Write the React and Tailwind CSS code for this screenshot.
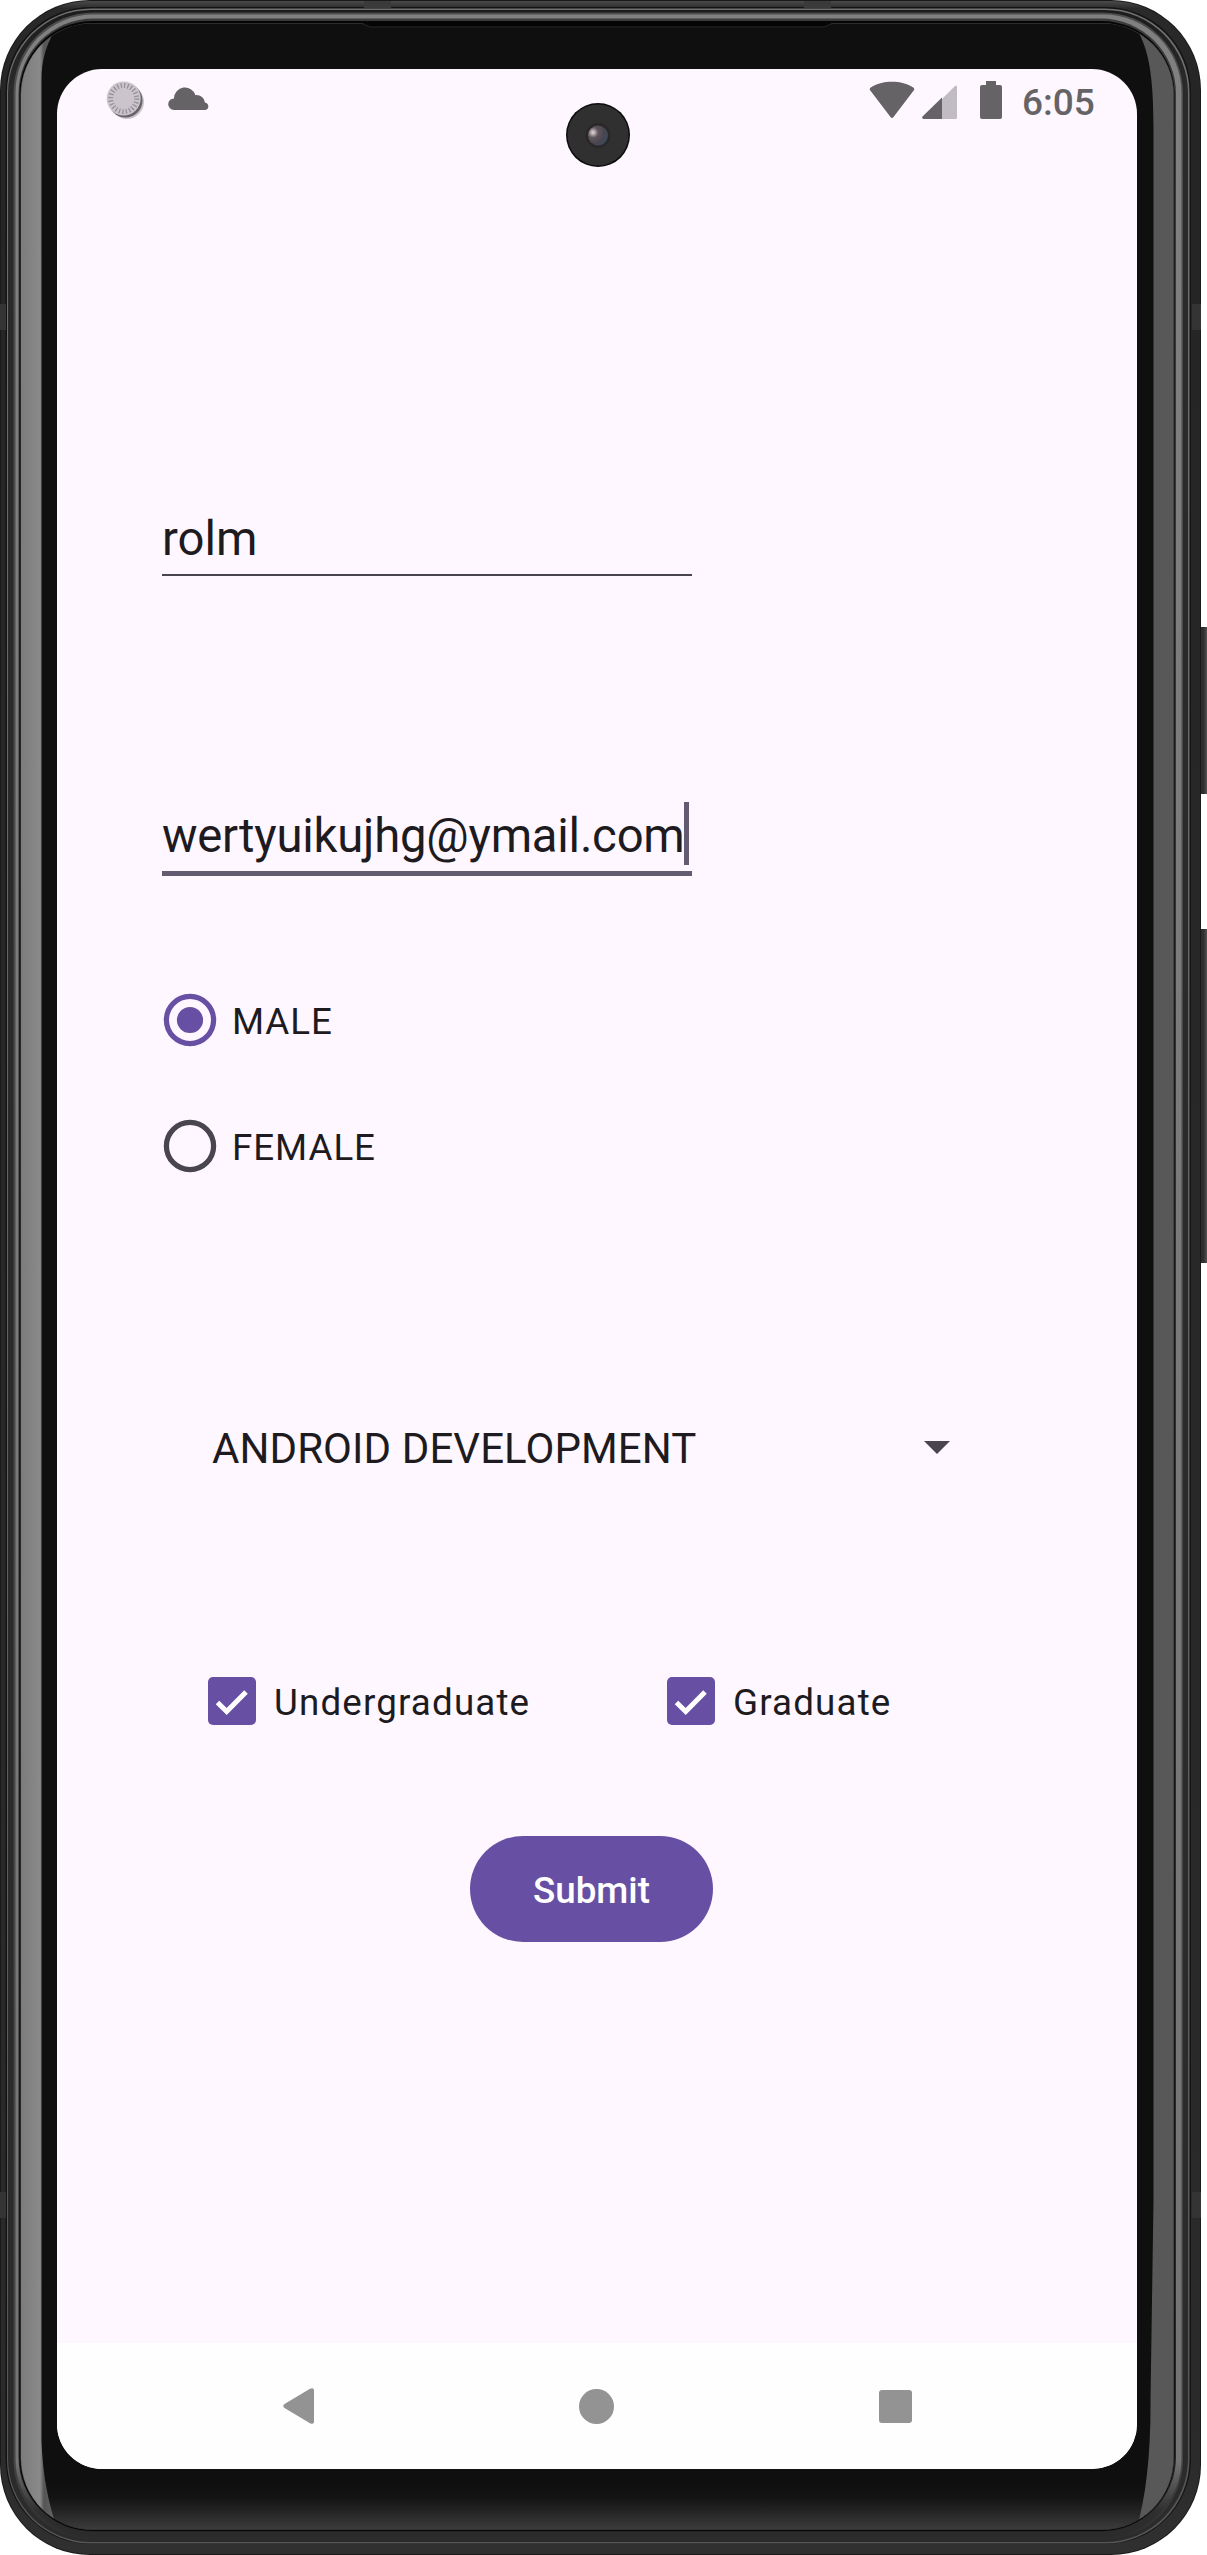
import React from "react";

const rings = [
  // x, y, right, bottom, radius, fill
  [0, 0, 1201, 2555, 90, "#191919"],
  [1, 1, 1200, 2554, 89, "url(#outer)"],
  [5.5, 7, 1191, 2544, 85, "#141414"],
  [7, 8.5, 1189.5, 2543.5, 84, "url(#line)"],
  [8, 10, 1188, 2542, 83, "url(#groove)"],
  [13.5, 12.5, 1183, 2540, 80, "url(#bezel)"],
  [15.5, 14.5, 1181.5, 2537, 78, "url(#shine)"],
  [18.5, 18.5, 1176, 2532, 75, "url(#shade)"],
  [19.5, 21, 1174.5, 2531, 73, "#050505"],
];

function DeviceFrame() {
  return (
    <svg className="absolute inset-0" width="1207" height="2555" viewBox="0 0 1207 2555" aria-hidden="true">
      <defs>
        <linearGradient id="outer" x2="0" y2="1">
          <stop offset="0" stopColor="#4a4a4a" />
          <stop offset="0.003" stopColor="#2a2a2a" />
          <stop offset="0.04" stopColor="#252525" />
          <stop offset="0.95" stopColor="#2a2a2a" />
          <stop offset="1" stopColor="#303030" />
        </linearGradient>
        <linearGradient id="line" x2="0" y2="1">
          <stop offset="0" stopColor="#707070" />
          <stop offset="1" stopColor="#565656" />
        </linearGradient>
        <linearGradient id="groove" x2="0" y2="1">
          <stop offset="0" stopColor="#1c1c1c" />
          <stop offset="0.03" stopColor="#2a2a2a" />
          <stop offset="1" stopColor="#2b2b2b" />
        </linearGradient>
        <linearGradient id="bezel" x2="0" y2="1">
          <stop offset="0" stopColor="#4c4c4c" />
          <stop offset="0.97" stopColor="#444444" />
          <stop offset="1" stopColor="#2c2c2c" />
        </linearGradient>
        <linearGradient id="shine" x2="0" y2="1">
          <stop offset="0" stopColor="#808080" />
          <stop offset="0.97" stopColor="#747474" />
          <stop offset="0.99" stopColor="#2e2e2e" />
          <stop offset="1" stopColor="#2b2b2b" />
        </linearGradient>
        <linearGradient id="shade" x2="0" y2="1">
          <stop offset="0" stopColor="#3b3b3b" />
          <stop offset="1" stopColor="#242424" />
        </linearGradient>
        <linearGradient id="left" x2="1" y2="0">
          <stop offset="0" stopColor="#7b7b7b" />
          <stop offset="0.5" stopColor="#8a8a8a" />
          <stop offset="0.6" stopColor="#555555" />
          <stop offset="1" stopColor="#6e6e6e" />
        </linearGradient>
        <linearGradient id="chin" x2="0" y2="1">
          <stop offset="0" stopColor="#0f0f0f" />
          <stop offset="0.35" stopColor="#131313" />
          <stop offset="1" stopColor="#3c3c3c" />
        </linearGradient>
        <linearGradient id="key" x2="1" y2="0">
          <stop offset="0" stopColor="#262626" />
          <stop offset="0.6" stopColor="#303030" />
          <stop offset="1" stopColor="#555555" />
        </linearGradient>
        <clipPath id="glass">
          <rect x="21" y="23.5" width="1152.500" height="2506" rx="71" />
        </clipPath>
      </defs>
      <rect x="1199" y="627" width="8" height="167" fill="url(#key)" />
      <rect x="1199" y="929" width="8" height="334" fill="url(#key)" />
      {rings.map(([x, y, r, b, rx, fill]) => (
        <rect key={x} x={x} y={y} width={r - x} height={b - y} rx={rx} fill={fill} />
      ))}
      <rect x="20.500" y="23" width="1153.500" height="2507" rx="72" fill="#4a4a4a" />
      <g clipPath="url(#glass)">
        <rect x="20" y="23" width="1155" height="2508" fill="#0f0f0f" />
        <rect x="20" y="2480" width="1155" height="50" fill="url(#chin)" />
        <path d="M20 23H60C46 42 41.500 60 41.500 80V2440Q43 2490 58 2531H20z" fill="url(#left)" />
        <path d="M1175 23H1133C1149 46 1153.500 75 1153.500 130V2200L1150.500 2400Q1151 2480 1136 2531H1175z" fill="#585858" />
      </g>
      <path d="M362 23h470l-8 3.500H372z" fill="#050505" />
      <path d="M362 23.500l8 3.500H824l8-3.500" fill="none" stroke="#262626" />
      <path d="M364 1h27v7h-27zM804 1h27v7h-27z" fill="#3a3a3a" />
      <path d="M0 304h6v26H0zM0 2192h6v26H0zM1192 304h9v26h-9zM1192 2192h9v26h-9z" fill="#343434" />
    </svg>
  );
}

function Camera() {
  return (
    <svg className="absolute left-[509px] top-[34px]" width="64" height="64" viewBox="0 0 64 64" aria-hidden="true">
      <defs>
        <radialGradient id="lens" cx="0.25" cy="0.35" r="0.75">
          <stop offset="0" stopColor="#e4dadd" />
          <stop offset="0.12" stopColor="#b9aeb2" />
          <stop offset="0.35" stopColor="#5f555c" />
          <stop offset="0.75" stopColor="#49454d" />
          <stop offset="1" stopColor="#3c4a5e" />
        </radialGradient>
      </defs>
      <circle cx="32" cy="32" r="32" fill="#0c0c0c" />
      <circle cx="32" cy="32" r="30.500" fill="#303030" />
      <circle cx="32" cy="32.500" r="12.500" fill="#282828" />
      <circle cx="32" cy="32.500" r="10" fill="url(#lens)" />
    </svg>
  );
}

function StatusBar() {
  return (
    <header className="flex h-[60px] items-start pl-[49px] pt-3 text-[#656366]">
      <svg width="38" height="38" viewBox="0 0 38 38">
        <circle cx="21" cy="21" r="17" fill="#c9c5ca" />
        <circle cx="19.500" cy="19.500" r="17" fill="#656366" />
        <circle cx="17.700" cy="17.500" r="17" fill="#cbc4cd" />
        <circle cx="17.700" cy="17.500" r="13" fill="none" stroke="#948e96" strokeWidth="5" strokeDasharray="1.250 2.153" />
      </svg>
      <svg className="ml-[24px] mt-[6px]" width="42" height="23" viewBox="0 0 42 23" fill="currentColor">
        <path d="M6 23a5.800 5.800 0 0 1 0-11.600A11 11 0 0 1 27.500 8.200 8.500 8.500 0 0 1 37 15.400 3.900 3.900 0 0 1 37.500 23z" />
      </svg>
      <svg className="ml-[659px]" width="46" height="38" viewBox="0 0 46 38" fill="currentColor">
        <path d="M1.300 9.500Q0 8 1.700 6.600C13-1.200 33-1.200 44.300 6.600Q46 8 44.700 9.500L24.500 36Q23 38 21.500 36z" />
      </svg>
      <svg className="ml-[7px] mt-[3px]" width="36" height="36" viewBox="0 0 36 36">
        <path d="M20 15 33 2Q35 .5 35 3V33.500Q35 35 33.500 35H20z" fill="#c1bcc3" />
        <path d="M20 13.500V35H1.500Q-.5 34.500.5 32.500z" fill="currentColor" />
      </svg>
      <svg className="ml-[22px]" width="22" height="38" viewBox="0 0 22 38" fill="currentColor">
        <path d="M6 0h10v4h4q2 0 2 2v30q0 2-2 2H2q-2 0-2-2V6q0-2 2-2h4z" />
      </svg>
      <time className="ml-5 mt-[2px] text-[37px] font-medium leading-[40px]">6:05</time>
    </header>
  );
}

function TextField({ value, focused }) {
  return (
    <div
      className={
        focused
          ? "flex h-[75px] w-[542px] bg-[linear-gradient(#625b71,#625b71)] bg-[length:530px_5px] bg-bottom-left bg-no-repeat"
          : "flex h-[75px] w-[530px] border-b-2 border-[#49454f]"
      }
    >
      <span
        className={
          focused
            ? "pt-[3px] text-[47.250px] leading-[64px] tracking-[-0.220px]"
            : "pt-[6px] text-[47.250px] leading-[64px]"
        }
      >
        {value}
      </span>
      {focused && <i className="-ml-px mt-px h-[63px] w-[5px] shrink-0 bg-[#625b71]" />}
    </div>
  );
}

function Radio({ label, checked }) {
  return (
    <label className="flex h-[126px] items-center pl-px text-[36.750px] tracking-[0.950px]">
      <svg
        className={checked ? "mr-[15px] text-[#6750a4]" : "mr-[15px] text-[#49454f]"}
        width="54"
        height="54"
        viewBox="0 0 54 54"
        fill="none"
      >
        <circle cx="27" cy="27" r="23.600" stroke="currentColor" strokeWidth="5.250" />
        {checked && <circle cx="27" cy="27" r="13.100" fill="currentColor" />}
      </svg>
      <span className="pt-1">{label}</span>
    </label>
  );
}

function Checkbox({ label }) {
  return (
    <label className="flex h-[48px] items-center text-[36.750px] tracking-[1.150px]">
      <svg className="mr-[18px]" width="48" height="48" viewBox="0 0 48 48">
        <rect width="48" height="48" rx="5" fill="#6750a4" />
        <path d="M9.500 25.500 18.700 34.500 38 15" fill="none" stroke="#fff" strokeWidth="5" />
      </svg>
      <span className="pt-1">{label}</span>
    </label>
  );
}

function NavBar() {
  return (
    <nav className="flex h-[126px] items-center bg-[#fefefe] pl-[226px]">
      <svg width="31" height="36" viewBox="0 0 31 36" fill="#939393">
        <path d="M1.500 16 27 .8Q31-1 31 2.500V33.500Q31 37 27 35.200L1.500 20Q-1 18 1.500 16z" />
      </svg>
      <i className="ml-[265px] h-[35px] w-[35px] rounded-full bg-[#939393]" />
      <i className="ml-[265px] h-[33px] w-[33px] rounded-[3px] bg-[#939393]" />
    </nav>
  );
}

export default function App() {
  return (
    <div className="relative h-[2555px] w-[1207px] overflow-hidden bg-white pl-[57px] pt-[69px] font-['Roboto',sans-serif] text-[#1d1b20]">
      <DeviceFrame />
      <div className="relative flex h-[2400px] w-[1080px] flex-col overflow-hidden rounded-[45px] bg-[#fef7ff]">
        <StatusBar />
        <Camera />
        <main className="flex flex-1 flex-col pl-[105px] pt-[372px]">
          <TextField value="rolm" />
          <div className="mt-[225px]">
            <TextField value="wertyuikujhg@ymail.com" focused />
          </div>
          <div className="mt-[81px]">
            <Radio label="MALE" checked />
            <Radio label="FEMALE" />
          </div>
          <div className="ml-[50px] mt-[214px] flex h-[50px] w-[738px] items-center justify-between text-[42px] tracking-[0.080px]">
            ANDROID DEVELOPMENT
            <svg className="mb-px" width="26" height="13" viewBox="0 0 26 13" fill="#49454f">
              <path d="M0 0h26L13 13z" />
            </svg>
          </div>
          <div className="ml-[46px] mt-[204px] flex h-[48px]">
            <div className="w-[459px]">
              <Checkbox label="Undergraduate" />
            </div>
            <Checkbox label="Graduate" />
          </div>
          <button className="ml-[308px] mt-[111px] h-[106px] w-[243px] rounded-full bg-[#6750a4] pt-[3px] text-[36.750px] font-medium text-white">
            Submit
          </button>
        </main>
        <NavBar />
      </div>
    </div>
  );
}
